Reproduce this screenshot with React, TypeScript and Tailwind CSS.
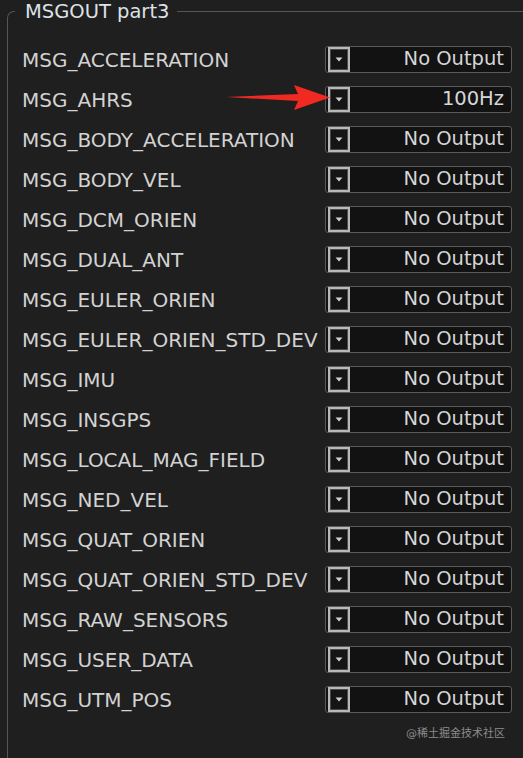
import React from "react";

const rows: [string, string][] = [
  ["MSG_ACCELERATION", "No Output"],
  ["MSG_AHRS", "100Hz"],
  ["MSG_BODY_ACCELERATION", "No Output"],
  ["MSG_BODY_VEL", "No Output"],
  ["MSG_DCM_ORIEN", "No Output"],
  ["MSG_DUAL_ANT", "No Output"],
  ["MSG_EULER_ORIEN", "No Output"],
  ["MSG_EULER_ORIEN_STD_DEV", "No Output"],
  ["MSG_IMU", "No Output"],
  ["MSG_INSGPS", "No Output"],
  ["MSG_LOCAL_MAG_FIELD", "No Output"],
  ["MSG_NED_VEL", "No Output"],
  ["MSG_QUAT_ORIEN", "No Output"],
  ["MSG_QUAT_ORIEN_STD_DEV", "No Output"],
  ["MSG_RAW_SENSORS", "No Output"],
  ["MSG_USER_DATA", "No Output"],
  ["MSG_UTM_POS", "No Output"],
];

function Combo({ value }: { value: string }) {
  return (
    <div className="flex h-[27px] w-[187px] items-center rounded-[3px] border border-[#5a5a5a] bg-[#121212] pl-[2px] pr-[7px]">
      <div className="flex h-[25px] w-[22px] shrink-0 items-center justify-center border-2 border-[#b8b8b8] bg-[#151515] shadow-[inset_0_0_0_1px_#4a4a4a]">
        <svg width="10" height="8" viewBox="0 0 10 8" className="mt-[2px]">
          <path d="M1.5 1.5 L8.5 1.5 L5 5.5 Z" fill="#cfcfcf" />
        </svg>
      </div>
      <span className="ml-auto whitespace-nowrap text-[19.5px] leading-none text-[#d6d6d6]">
        {value}
      </span>
    </div>
  );
}

export default function App() {
  return (
    <div
      className="relative h-[758px] w-[523px] overflow-hidden bg-[#1f1f1f]"
      style={{ fontFamily: '"DejaVu Sans", "Noto Sans CJK SC", sans-serif' }}
    >
      <fieldset className="ml-[7px] min-h-[800px] w-[560px] rounded-tl-[7px] border-l border-t border-[#555555] p-0 pl-[14px] pt-[16px]">
        <legend className="ml-[-7px] pl-[10px] pr-[8px] text-[19.5px] leading-[23px] text-[#dde1e8]">
          MSGOUT part3
        </legend>
        <div className="flex flex-col">
          {rows.map(([label, value]) => (
            <div key={label} className="flex h-[40px] items-center">
              <div className="w-[303px] whitespace-nowrap pt-[1px] text-[20px] leading-none text-[#d2d2d2]">
                {label}
              </div>
              <Combo value={value} />
            </div>
          ))}
        </div>
      </fieldset>

      <svg
        className="absolute left-[226px] top-[83px]"
        width="106"
        height="30"
        viewBox="0 0 106 30"
      >
        <path d="M0 14 L72 11 L68 2 L104 14.5 L68 27 L72 18 Z" fill="#f02a22" />
      </svg>

      <div className="absolute left-[406px] top-[726px] whitespace-nowrap text-[11px] text-[#8c8c8c]">
        @稀土掘金技术社区
      </div>
    </div>
  );
}
